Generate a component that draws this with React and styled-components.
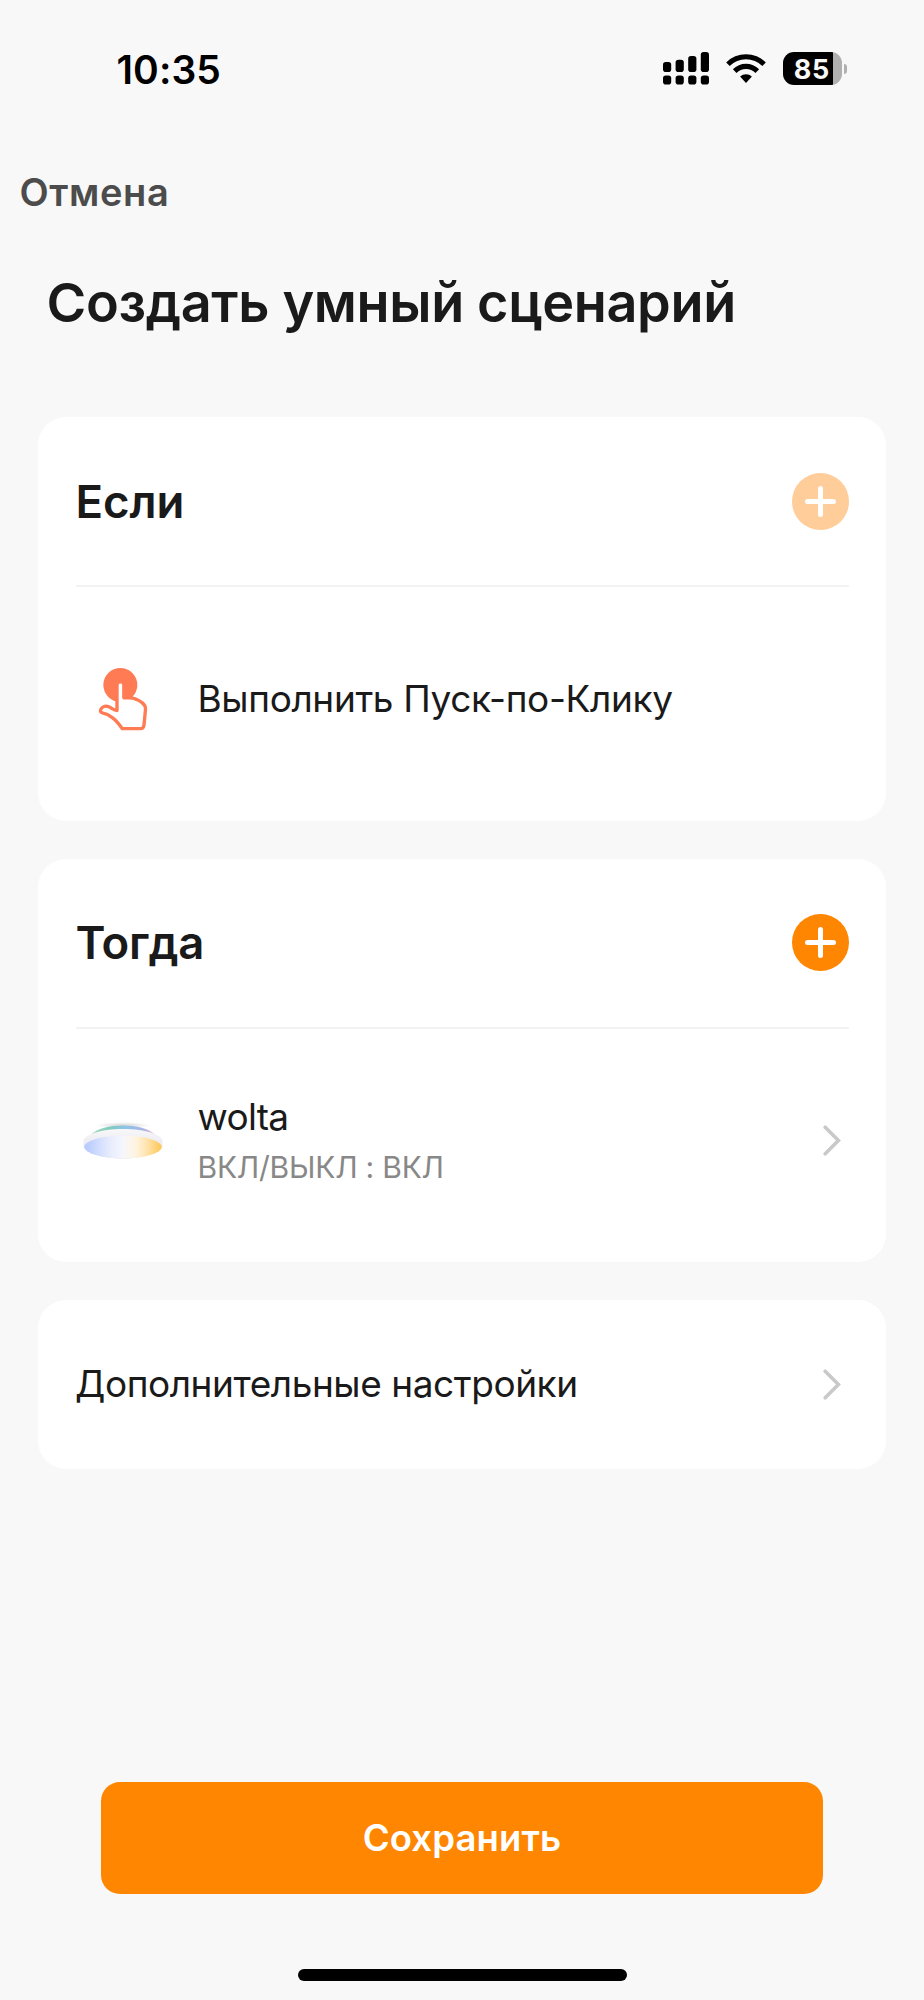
import React from "react"
import styled, { createGlobalStyle } from "styled-components"

const GlobalStyle = createGlobalStyle`
  * {
    box-sizing: border-box;
  }

  body {
    margin: 0;
    background: #f8f8f8;
    font-family: Inter, "Liberation Sans", sans-serif;
    color: #1a1a1a;
  }

  svg {
    display: block;
  }

  button {
    border: 0;
    padding: 0;
    font-family: inherit;
  }
`

const Screen = styled.div`
  display: flex;
  flex-direction: column;
  width: 924px;
  height: 2000px;
  background: #f8f8f8;
  overflow: hidden;
`

const StatusBar = styled.header`
  display: flex;
  align-items: center;
  justify-content: space-between;
  height: 137px;
  padding: 0 77px 0 116.5px;
  color: #000;
`

const Time = styled.span`
  padding-top: 1px;
  font-size: 39px;
  font-weight: 600;
  letter-spacing: 0.1px;
`

const Indicators = styled.div`
  display: flex;
  align-items: center;
  gap: 17px;
`

const Battery = styled.div`
  display: flex;
  align-items: center;
  gap: 2px;
`

const BatteryBody = styled.div`
  display: flex;
  align-items: center;
  justify-content: center;
  width: 59.5px;
  height: 33px;
  padding: 1px 1px 0 0;
  border-radius: 11px;
  background: linear-gradient(to right, #000 85%, #b0b0b0 85%);
  color: #f8f8f8;
  font-size: 27px;
  font-weight: 700;
  letter-spacing: 0.5px;
`

const BatteryCap = styled.div`
  width: 3px;
  height: 10px;
  border-radius: 0 3px 3px 0;
  background: #b0b0b0;
`

const Nav = styled.nav`
  display: flex;
  align-items: center;
  height: 110px;
  padding-left: 19.5px;
`

const Cancel = styled.button`
  background: none;
  color: #4c4c4c;
  font-size: 38px;
  font-weight: 600;
  letter-spacing: 0.6px;
`

const Title = styled.h1`
  margin: 0 0 59px;
  padding-left: 46.5px;
  font-size: 54px;
  font-weight: 600;
  line-height: 111px;
  letter-spacing: -0.36px;
`

const Cards = styled.main`
  display: flex;
  flex: 1;
  flex-direction: column;
  gap: 38px;
  padding: 0 38px;
`

const Card = styled.section`
  padding: 0 37.5px 10.5px;
  border-radius: 28px;
  background: #fff;
`

const CardHeader = styled.div`
  display: flex;
  align-items: center;
  justify-content: space-between;
  height: 170px;
  border-bottom: 2px solid #f3f3f3;

  h2 {
    margin: 0;
    font-size: 45.5px;
    font-weight: 600;
    letter-spacing: ${props => props.$spacing || "0"};
  }
`

const AddButton = styled.button`
  display: flex;
  align-items: center;
  justify-content: center;
  width: 57px;
  height: 57px;
  border-radius: 50%;
  background: ${props => (props.disabled ? "#ffcd99" : "#ff8600")};
`

const Row = styled.div`
  display: flex;
  align-items: center;
  height: 223px;
`

const IconSlot = styled.div`
  display: flex;
  justify-content: center;
  width: 94px;
  margin-right: 28px;
`

const RowText = styled.div`
  display: flex;
  flex: 1;
  flex-direction: column;
`

const RowTitle = styled.span`
  font-size: 37px;
  line-height: 50px;
  letter-spacing: ${props => props.$spacing || "-0.36px"};
`

const DeviceText = styled(RowText)`
  padding-top: 4px;
`

const RowNote = styled.span`
  color: #888;
  font-size: 30px;
  line-height: 50px;
  letter-spacing: -0.23px;
`

const SettingsCard = styled.section`
  display: flex;
  align-items: center;
  justify-content: space-between;
  height: 168.5px;
  padding: 0 37.5px 0 37px;
  border-radius: 28px;
  background: #fff;
`

const ArrowIcon = styled.svg`
  width: 18px;
  height: 31px;
  margin-right: 8px;
  flex: none;
`

const Footer = styled.footer`
  display: flex;
  flex-direction: column;
  align-items: center;
  gap: 75px;
  padding-bottom: 19px;
`

const SaveButton = styled.button`
  width: 722px;
  height: 112.5px;
  border-radius: 19px;
  background: #ff8600;
  color: #fff;
  font-size: 36.5px;
  font-weight: 600;
  letter-spacing: 0.1px;
`

const HomeIndicator = styled.div`
  width: 329px;
  height: 12px;
  border-radius: 6px;
  background: #000;
`

const bars = [10, 7.7, 4, 0]

const Signal = () => (
  <svg width="46" height="33" viewBox="0 0 46 33">
    {bars.map((top, index) => (
      <g key={top}>
        <rect x={index * 12.6} y={top} width="8.2" height={20 - top} rx="2.8" />
        <rect x={index * 12.6} y="23.5" width="8.2" height="9" rx="2.8" />
      </g>
    ))}
  </svg>
)

const Wifi = () => (
  <svg width="40" height="30" viewBox="0 0 40 30">
    <path d="M.2 8.4A28 28 0 0 1 39.8 8.4L36.3 12A23 23 0 0 0 3.7 12Z" />
    <path d="M6.9 15.3A18.5 18.5 0 0 1 33.1 15.3L29.5 19A13.5 13.5 0 0 0 10.5 19Z" />
    <path d="M14.1 22.5A8.7 8.7 0 0 1 25.9 22.5L20 29Z" />
  </svg>
)

const Plus = () => (
  <svg width="31" height="31" viewBox="0 0 31 31" stroke="#fff" strokeWidth="5" strokeLinecap="round">
    <path d="M15.5 2.5V28.5M2.5 15.5H28.5" />
  </svg>
)

const Arrow = () => (
  <ArrowIcon viewBox="0 0 18 31" fill="none" stroke="#c9c9c9" strokeWidth="3.6" strokeLinecap="round" strokeLinejoin="miter">
    <path d="M2.2 2.2L15.4 15.5L2.2 28.8" />
  </ArrowIcon>
)

const Tap = () => (
  <svg width="50" height="64" viewBox="84 80 150 192">
    <circle cx="151" cy="134" r="51" fill="#ff7b54" />
    <path
      d="M141 133C141 121.5 161.5 121.5 161.500 133V172.5H178C190 172.5 206 179 217 187.5C224 193 227 198 226.5 207L222 254C221.5 261 218 265 211 265H157C147 251 139 241 128 232.5C117 224 108 219.5 97 217.5C91 216.5 89.5 212 93 206C98 197.500 108 195 118 200C126 204 132 210.5 141 210.5Z"
      fill="#fff"
      stroke="#ff7b54"
      strokeWidth="10"
      strokeLinejoin="round"
    />
  </svg>
)

const Lamp = () => (
  <svg width="82" height="37" viewBox="0 0 82 37">
    <defs>
      <linearGradient id="glow">
        <stop offset="0" stopColor="#b4c8ff" />
        <stop offset="0.2" stopColor="#d3defe" />
        <stop offset="0.32" stopColor="#e6ebfd" />
        <stop offset="0.5" stopColor="#f6f7fd" />
        <stop offset="0.68" stopColor="#fff3dc" />
        <stop offset="0.84" stopColor="#ffdf9f" />
        <stop offset="1" stopColor="#ffc552" />
      </linearGradient>
      <linearGradient id="back">
        <stop offset="0" stopColor="#a9d9bb" />
        <stop offset="0.3" stopColor="#7fcbbd" />
        <stop offset="0.55" stopColor="#8cc4e8" />
        <stop offset="0.8" stopColor="#a8b4e6" />
        <stop offset="1" stopColor="#e9bdd6" />
      </linearGradient>
      <linearGradient id="rim" x1="0" y1="0" x2="0" y2="1">
        <stop offset="0" stopColor="#f8f8fb" />
        <stop offset="0.4" stopColor="#eeeef3" />
        <stop offset="1" stopColor="#e2e2e9" />
      </linearGradient>
      <radialGradient id="shade">
        <stop offset="0" stopColor="#d4d4d4" />
        <stop offset="1" stopColor="#d4d4d4" stopOpacity="0" />
      </radialGradient>
    </defs>
    <ellipse cx="41" cy="3.5" rx="27" ry="3.5" fill="url(#shade)" />
    <path d="M9 12.5C21 0.500 61 0.500 73 12.5Z" fill="url(#back)" />
    <path d="M1.5 19C1.5 13 18 7 41 7S80.5 13 80.5 19V23C80.5 30 63 36.5 41 36.5S1.5 30 1.5 23Z" fill="url(#rim)" />
    <ellipse cx="41" cy="25" rx="38.8" ry="11.3" fill="url(#glow)" />
  </svg>
)

export default () => (
  <>
    <GlobalStyle />
    <Screen>
      <StatusBar>
        <Time>10:35</Time>
        <Indicators>
          <Signal />
          <Wifi />
          <Battery>
            <BatteryBody>85</BatteryBody>
            <BatteryCap />
          </Battery>
        </Indicators>
      </StatusBar>
      <Nav>
        <Cancel>Отмена</Cancel>
      </Nav>
      <Title>Создать умный сценарий</Title>
      <Cards>
        <Card>
          <CardHeader>
            <h2>Если</h2>
            <AddButton disabled>
              <Plus />
            </AddButton>
          </CardHeader>
          <Row>
            <IconSlot>
              <Tap />
            </IconSlot>
            <RowText>
              <RowTitle>Выполнить Пуск-по-Клику</RowTitle>
            </RowText>
          </Row>
        </Card>
        <Card>
          <CardHeader $spacing="-0.4px">
            <h2>Тогда</h2>
            <AddButton>
              <Plus />
            </AddButton>
          </CardHeader>
          <Row>
            <IconSlot>
              <Lamp />
            </IconSlot>
            <DeviceText>
              <RowTitle $spacing="-0.7px">wolta</RowTitle>
              <RowNote>ВКЛ/ВЫКЛ : ВКЛ</RowNote>
            </DeviceText>
            <Arrow />
          </Row>
        </Card>
        <SettingsCard>
          <RowTitle $spacing="-0.43px">Дополнительные настройки</RowTitle>
          <Arrow />
        </SettingsCard>
      </Cards>
      <Footer>
        <SaveButton>Сохранить</SaveButton>
        <HomeIndicator />
      </Footer>
    </Screen>
  </>
)
